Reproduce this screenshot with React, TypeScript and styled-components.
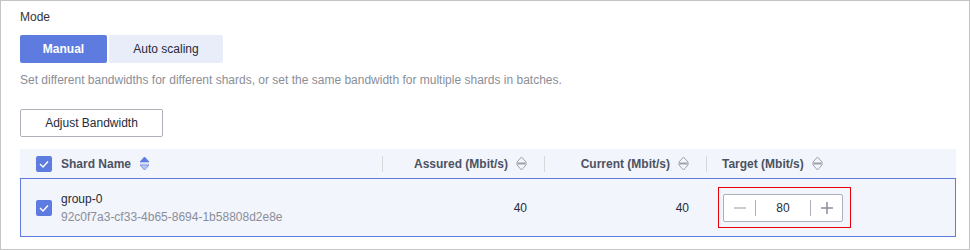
import styled, { createGlobalStyle } from "styled-components";

const GlobalStyle = createGlobalStyle`
  body {
    margin: 0;
    font-family: "Liberation Sans", Arial, sans-serif;
    font-size: 12px;
    color: #252b3a;
    background: #ffffff;
  }
`;

const Frame = styled.div`
  box-sizing: border-box;
  width: 970px;
  height: 250px;
  border: 1px solid #c4c4c4;
  padding: 7px 13px 0 19px;
`;

const Label = styled.div`
  line-height: 18px;
  color: #333333;
`;

const Segments = styled.div`
  display: flex;
  gap: 2px;
  margin-top: 9px;
`;

const Segment = styled.button<{ $active?: boolean; $w: number }>`
  width: ${(p) => p.$w}px;
  height: 28px;
  border: none;
  border-radius: 2px;
  padding: 0;
  font-family: inherit;
  font-size: 12px;
  cursor: pointer;
  background: ${(p) => (p.$active ? "#5e7ce0" : "#e9edfa")};
  color: ${(p) => (p.$active ? "#ffffff" : "#252b3a")};
  font-weight: ${(p) => (p.$active ? "bold" : "normal")};
`;

const Hint = styled.div`
  margin-top: 8px;
  line-height: 18px;
  color: #8a8e99;
`;

const OutlineButton = styled.button`
  margin-top: 20px;
  width: 143px;
  height: 28px;
  border: 1px solid #adb0b8;
  border-radius: 2px;
  background: #ffffff;
  font-family: inherit;
  font-size: 12px;
  color: #252b3a;
  cursor: pointer;
`;

const cols = "41px 321px 162px 162px 250px";

const HeadRow = styled.div`
  display: grid;
  grid-template-columns: ${cols};
  height: 29px;
  margin-top: 12px;
  background: #f2f5fc;
`;

const BodyRow = styled.div`
  display: grid;
  grid-template-columns: ${cols};
  height: 59px;
  background: #f2f5fc;
  box-shadow: inset 0 0 0 1px #5e7ce0;
`;

const CheckCell = styled.div`
  display: flex;
  align-items: center;
  padding-left: 16px;
`;

const HeadCell = styled.div<{ $right?: boolean; $divider?: boolean }>`
  display: flex;
  align-items: center;
  gap: 8px;
  font-weight: bold;
  color: #4c5262;
  line-height: 18px;
  padding-right: ${(p) => (p.$right ? "17px" : "0")};
  justify-content: ${(p) => (p.$right ? "flex-end" : "flex-start")};
`;

const Divider = styled.span<{ $grow?: boolean }>`
  width: 1px;
  height: 16px;
  background: #d7d8da;
  margin-right: ${(p) => (p.$grow ? "auto" : "7px")};
`;

const Cell = styled.div<{ $right?: boolean }>`
  display: flex;
  flex-direction: column;
  justify-content: center;
  align-items: ${(p) => (p.$right ? "flex-end" : "flex-start")};
  padding-right: ${(p) => (p.$right ? "17px" : "0")};
  line-height: 18px;
`;

const SubText = styled.span`
  color: #8a8e99;
`;

const TargetCell = styled.div`
  display: flex;
  align-items: center;
  padding-left: 12px;
`;

const Highlight = styled.div`
  border: 1px solid #e8000b;
  padding: 6px 7px 5px 4px;
`;

const Stepper = styled.div`
  display: flex;
  align-items: center;
  width: 120px;
  height: 28px;
  box-sizing: border-box;
  border: 1px solid #adb0b8;
  border-radius: 2px;
  background: #ffffff;
`;

const StepButton = styled.span<{ $dim?: boolean }>`
  display: flex;
  align-items: center;
  justify-content: center;
  width: 31px;
  height: 100%;
  color: ${(p) => (p.$dim ? "#b8bcc4" : "#8a8e99")};
`;

const StepSep = styled.span`
  width: 1px;
  height: 16px;
  background: #adb0b8;
`;

const StepValue = styled.span`
  flex: 1;
  text-align: center;
  color: #252b3a;
`;

const Box = styled.span`
  display: flex;
  align-items: center;
  justify-content: center;
  width: 16px;
  height: 16px;
  border-radius: 2px;
  background: #5e7ce0;
`;

const Checkbox = () => (
  <Box>
    <svg width="10" height="8" viewBox="0 0 10 8">
      <path d="M1 4 L4 7 L9 1.5" stroke="#fff" strokeWidth="1.4" fill="none" />
    </svg>
  </Box>
);

const SortIcon = ({ active }: { active?: boolean }) =>
  active ? (
    <svg width="11" height="15" viewBox="0 0 11 15">
      <path d="M5.5 1 L10 6 L1 6 Z" fill="#5e7ce0" stroke="#5e7ce0" strokeLinejoin="round" />
      <rect x="1" y="6.5" width="9" height="2" fill="#dde2f3" />
      <path d="M1 9 L10 9 L5.5 14 Z" fill="#b9c6f2" stroke="#7c93e6" strokeLinejoin="round" />
    </svg>
  ) : (
    <svg width="11" height="15" viewBox="0 0 11 15">
      <path
        d="M5.5 1 L10 6 L10 9 L5.5 14 L1 9 L1 6 Z"
        fill="none"
        stroke="#9ea2ab"
        strokeLinejoin="round"
      />
      <rect x="1.5" y="6.5" width="8" height="2" fill="#9ea2ab" />
    </svg>
  );

const Minus = () => (
  <svg width="12" height="12" viewBox="0 0 12 12">
    <path d="M0 6 H12" stroke="currentColor" strokeWidth="1.5" />
  </svg>
);

const Plus = () => (
  <svg width="12" height="12" viewBox="0 0 12 12">
    <path d="M0 6 H12 M6 0 V12" stroke="currentColor" strokeWidth="1.5" />
  </svg>
);

export default function App() {
  return (
    <>
      <GlobalStyle />
      <Frame>
        <Label>Mode</Label>
        <Segments>
          <Segment $active $w={87}>Manual</Segment>
          <Segment $w={114}>Auto scaling</Segment>
        </Segments>
        <Hint>
          Set different bandwidths for different shards, or set the same bandwidth for multiple
          shards in batches.
        </Hint>
        <OutlineButton>Adjust Bandwidth</OutlineButton>

        <HeadRow>
          <CheckCell>
            <Checkbox />
          </CheckCell>
          <HeadCell>
            Shard Name <SortIcon active />
          </HeadCell>
          <HeadCell $right>
            <Divider $grow />
            Assured (Mbit/s) <SortIcon />
          </HeadCell>
          <HeadCell $right>
            <Divider $grow />
            Current (Mbit/s) <SortIcon />
          </HeadCell>
          <HeadCell>
            <Divider />
            Target (Mbit/s) <SortIcon />
          </HeadCell>
        </HeadRow>

        <BodyRow>
          <CheckCell>
            <Checkbox />
          </CheckCell>
          <Cell>
            <span>group-0</span>
            <SubText>92c0f7a3-cf33-4b65-8694-1b58808d2e8e</SubText>
          </Cell>
          <Cell $right>40</Cell>
          <Cell $right>40</Cell>
          <TargetCell>
            <Highlight>
              <Stepper>
                <StepButton $dim>
                  <Minus />
                </StepButton>
                <StepSep />
                <StepValue>80</StepValue>
                <StepSep />
                <StepButton>
                  <Plus />
                </StepButton>
              </Stepper>
            </Highlight>
          </TargetCell>
        </BodyRow>
      </Frame>
    </>
  );
}
